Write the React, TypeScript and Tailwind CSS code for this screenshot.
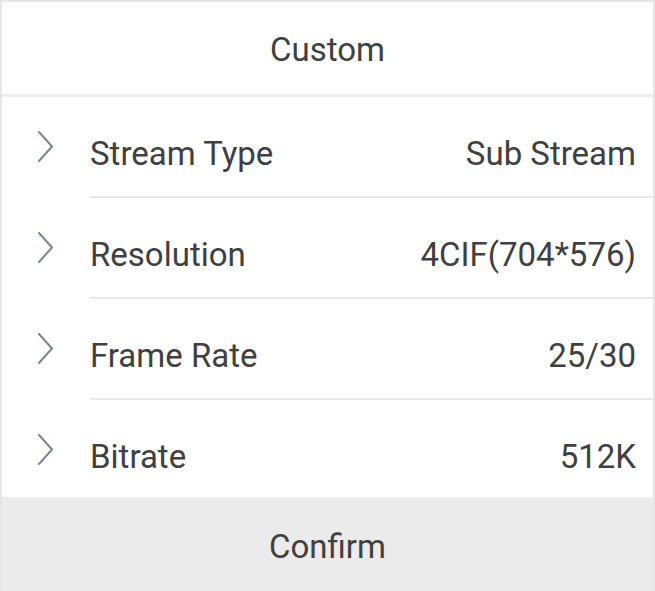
import React from "react";

const rows = [
  { label: "Stream Type", value: "Sub Stream" },
  { label: "Resolution", value: "4CIF(704*576)" },
  { label: "Frame Rate", value: "25/30" },
  { label: "Bitrate", value: "512K" },
];

function Chevron() {
  return (
    <svg width="18" height="32" viewBox="0 0 18 32" className="block">
      <path d="M2 1 L15 15.5 L2 30" fill="none" stroke="#7b8594" strokeWidth="2" strokeLinecap="round" strokeLinejoin="round" />
    </svg>
  );
}

export default function App() {
  return (
    <div
      className="w-[655px] h-[591px] bg-[#e6e6e6] pt-[2px] px-[2px] overflow-hidden"
      style={{ fontFamily: "Roboto, 'Liberation Sans', sans-serif" }}
    >
      <div className="flex flex-col h-full bg-white text-[#404040]">
        <div className="h-[95px] flex items-center justify-center text-[33px] leading-none border-b-[3px] border-[#ececec] shrink-0 pt-[2px]">
          Custom
        </div>
        <div className="flex flex-col">
          {rows.map((r, i) => (
            <div key={r.label} className={`flex ${i === rows.length - 1 ? "h-[97px]" : "h-[101px]"}`}>
              <div className="w-[88px] shrink-0 pl-[35px] pt-[34px]">
                <Chevron />
              </div>
              <div
                className={`flex-1 flex justify-between pr-[17px] pt-[37px] text-[33px] leading-[39px] ${
                  i === rows.length - 1 ? "" : "border-b-2 border-[#e8e8e8]"
                }`}
              >
                <span>{r.label}</span>
                <span>{r.value}</span>
              </div>
            </div>
          ))}
        </div>
        <div className="flex-1 bg-[#ebebeb] flex items-center justify-center text-[33px] leading-none pt-[4px]">
          Confirm
        </div>
      </div>
    </div>
  );
}
